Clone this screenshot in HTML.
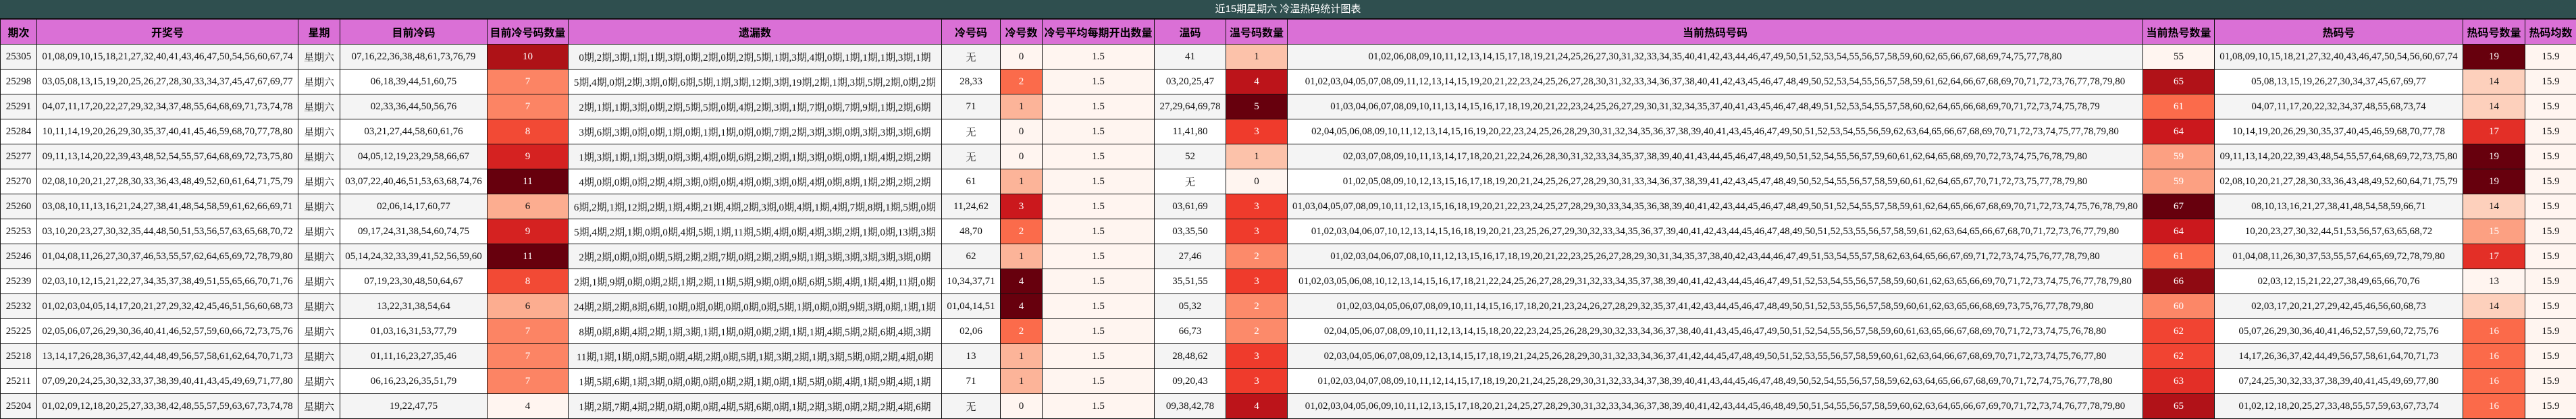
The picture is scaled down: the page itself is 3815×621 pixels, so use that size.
<!DOCTYPE html>
<html><head><meta charset="utf-8">
<style>
*{margin:0;padding:0;box-sizing:border-box}
body{width:3815px;height:621px;background:#fff;overflow:hidden;font-family:"Liberation Serif","Noto Serif CJK SC",serif;}
.t{height:28px;background:#2f4f4f;border-bottom:1px solid #111;color:#fff;text-align:center;font:15px/27px "Liberation Sans","Noto Sans CJK SC",sans-serif;}
table{border-collapse:collapse;table-layout:fixed;width:3815px}
td,th{border:1px solid #111;text-align:center;white-space:nowrap;overflow:visible;font-size:15px;color:#111;height:37px;padding:0}
th{background:#da70d6;font:bold 16px "Liberation Sans","Noto Sans CJK SC",sans-serif;color:#000}
tr:nth-child(odd) td{background:#f4f4f4}
tr:nth-child(even) td{background:#fff}
td span{display:inline-block;margin:0 -300px}
tr td.w{color:#fff}
tr td.p{background:#fff5f0}
</style></head><body>
<div class="t">近15期星期六 冷温热码统计图表</div>
<table>
<colgroup><col style="width:54px"><col style="width:387px"><col style="width:62px"><col style="width:218px"><col style="width:120px"><col style="width:553px"><col style="width:87px"><col style="width:62px"><col style="width:166px"><col style="width:106px"><col style="width:91px"><col style="width:1267px"><col style="width:106px"><col style="width:368px"><col style="width:92px"><col style="width:76px"></colgroup>
<thead><tr><th>期次</th><th>开奖号</th><th>星期</th><th>目前冷码</th><th>目前冷号码数量</th><th>遗漏数</th><th>冷号码</th><th>冷号数</th><th>冷号平均每期开出数量</th><th>温码</th><th>温号码数量</th><th>当前热码号码</th><th>当前热号数量</th><th>热码号</th><th>热码号数量</th><th>热码均数</th></tr></thead>
<tbody>
<tr><td>25305</td><td><span>01,08,09,10,15,18,21,27,32,40,41,43,46,47,50,54,56,60,67,74</span></td><td>星期六</td><td><span>07,16,22,36,38,48,61,73,76,79</span></td><td class="w" style="background:#ae1217">10</td><td><span>0期,2期,3期,1期,1期,3期,0期,2期,0期,2期,5期,1期,3期,4期,0期,1期,1期,1期,3期,1期</span></td><td>无</td><td class="p">0</td><td class="p">1.5</td><td>41</td><td style="background:#fcc2aa">1</td><td><span>01,02,06,08,09,10,11,12,13,14,15,17,18,19,21,24,25,26,27,30,31,32,33,34,35,40,41,42,43,44,46,47,49,50,51,52,53,54,55,56,57,58,59,60,62,65,66,67,68,69,74,75,77,78,80</span></td><td class="p">55</td><td><span>01,08,09,10,15,18,21,27,32,40,43,46,47,50,54,56,60,67,74</span></td><td class="w" style="background:#67000d">19</td><td class="p">15.9</td></tr>
<tr><td>25298</td><td><span>03,05,08,13,15,19,20,25,26,27,28,30,33,34,37,45,47,67,69,77</span></td><td>星期六</td><td><span>06,18,39,44,51,60,75</span></td><td class="w" style="background:#fc8464">7</td><td><span>5期,4期,0期,2期,3期,0期,6期,5期,1期,3期,12期,3期,19期,2期,1期,3期,5期,2期,0期,2期</span></td><td>28,33</td><td class="w" style="background:#fb6b4b">2</td><td class="p">1.5</td><td>03,20,25,47</td><td class="w" style="background:#bc141a">4</td><td><span>01,02,03,04,05,07,08,09,11,12,13,14,15,19,20,21,22,23,24,25,26,27,28,30,31,32,33,34,36,37,38,40,41,42,43,45,46,47,48,49,50,52,53,54,55,56,57,58,59,61,62,64,66,67,68,69,70,71,72,73,76,77,78,79,80</span></td><td class="w" style="background:#b11218">65</td><td><span>05,08,13,15,19,26,27,30,34,37,45,67,69,77</span></td><td style="background:#fdd0bc">14</td><td class="p">15.9</td></tr>
<tr><td>25291</td><td><span>04,07,11,17,20,22,27,29,32,34,37,48,55,64,68,69,71,73,74,78</span></td><td>星期六</td><td><span>02,33,36,44,50,56,76</span></td><td class="w" style="background:#fc8464">7</td><td><span>2期,1期,1期,3期,0期,2期,5期,5期,0期,4期,2期,3期,1期,7期,0期,7期,9期,1期,2期,6期</span></td><td>71</td><td style="background:#fcb499">1</td><td class="p">1.5</td><td>27,29,64,69,78</td><td class="w" style="background:#67000d">5</td><td><span>01,03,04,06,07,08,09,10,11,13,14,15,16,17,18,19,20,21,22,23,24,25,26,27,29,30,31,32,34,35,37,40,41,43,45,46,47,48,49,51,52,53,54,55,57,58,60,62,64,65,66,68,69,70,71,72,73,74,75,78,79</span></td><td class="w" style="background:#fb6b4b">61</td><td><span>04,07,11,17,20,22,32,34,37,48,55,68,73,74</span></td><td style="background:#fdd0bc">14</td><td class="p">15.9</td></tr>
<tr><td>25284</td><td><span>10,11,14,19,20,26,29,30,35,37,40,41,45,46,59,68,70,77,78,80</span></td><td>星期六</td><td><span>03,21,27,44,58,60,61,76</span></td><td class="w" style="background:#f24a35">8</td><td><span>3期,6期,3期,0期,0期,1期,0期,1期,1期,0期,0期,7期,2期,3期,3期,0期,3期,3期,3期,6期</span></td><td>无</td><td class="p">0</td><td class="p">1.5</td><td>11,41,80</td><td class="w" style="background:#ef3b2c">3</td><td><span>02,04,05,06,08,09,10,11,12,13,14,15,16,19,20,22,23,24,25,26,28,29,30,31,32,34,35,36,37,38,39,40,41,43,45,46,47,49,50,51,52,53,54,55,56,59,62,63,64,65,66,67,68,69,70,71,72,73,74,75,77,78,79,80</span></td><td class="w" style="background:#cb181d">64</td><td><span>10,14,19,20,26,29,30,35,37,40,45,46,59,68,70,77,78</span></td><td class="w" style="background:#e32f27">17</td><td class="p">15.9</td></tr>
<tr><td>25277</td><td><span>09,11,13,14,20,22,39,43,48,52,54,55,57,64,68,69,72,73,75,80</span></td><td>星期六</td><td><span>04,05,12,19,23,29,58,66,67</span></td><td class="w" style="background:#d52221">9</td><td><span>1期,3期,1期,1期,3期,0期,3期,4期,0期,6期,2期,2期,1期,3期,0期,0期,1期,4期,2期,2期</span></td><td>无</td><td class="p">0</td><td class="p">1.5</td><td>52</td><td style="background:#fcc2aa">1</td><td><span>02,03,07,08,09,10,11,13,14,17,18,20,21,22,24,26,28,30,31,32,33,34,35,37,38,39,40,41,43,44,45,46,47,48,49,50,51,52,54,55,56,57,59,60,61,62,64,65,68,69,70,72,73,74,75,76,78,79,80</span></td><td class="w" style="background:#fca082">59</td><td><span>09,11,13,14,20,22,39,43,48,54,55,57,64,68,69,72,73,75,80</span></td><td class="w" style="background:#67000d">19</td><td class="p">15.9</td></tr>
<tr><td>25270</td><td><span>02,08,10,20,21,27,28,30,33,36,43,48,49,52,60,61,64,71,75,79</span></td><td>星期六</td><td><span>03,07,22,40,46,51,53,63,68,74,76</span></td><td class="w" style="background:#67000d">11</td><td><span>4期,0期,0期,0期,2期,4期,3期,0期,0期,4期,0期,3期,0期,4期,0期,8期,1期,2期,2期,2期</span></td><td>61</td><td style="background:#fcb499">1</td><td class="p">1.5</td><td>无</td><td class="p">0</td><td><span>01,02,05,08,09,10,12,13,15,16,17,18,19,20,21,24,25,26,27,28,29,30,31,33,34,36,37,38,39,41,42,43,45,47,48,49,50,52,54,55,56,57,58,59,60,61,62,64,65,67,70,71,72,73,75,77,78,79,80</span></td><td class="w" style="background:#fca082">59</td><td><span>02,08,10,20,21,27,28,30,33,36,43,48,49,52,60,64,71,75,79</span></td><td class="w" style="background:#67000d">19</td><td class="p">15.9</td></tr>
<tr><td>25260</td><td><span>03,08,10,11,13,16,21,24,27,38,41,48,54,58,59,61,62,66,69,71</span></td><td>星期六</td><td><span>02,06,14,17,60,77</span></td><td style="background:#fcad90">6</td><td><span>6期,2期,1期,12期,2期,1期,4期,21期,4期,2期,3期,0期,4期,1期,4期,7期,8期,1期,5期,0期</span></td><td>11,24,62</td><td class="w" style="background:#cb181d">3</td><td class="p">1.5</td><td>03,61,69</td><td class="w" style="background:#ef3b2c">3</td><td><span>01,03,04,05,07,08,09,10,11,12,13,15,16,18,19,20,21,22,23,24,25,27,28,29,30,33,34,35,36,38,39,40,41,42,43,44,45,46,47,48,49,50,51,52,54,55,57,58,59,61,62,64,65,66,67,68,69,70,71,72,73,74,75,76,78,79,80</span></td><td class="w" style="background:#67000d">67</td><td><span>08,10,13,16,21,27,38,41,48,54,58,59,66,71</span></td><td style="background:#fdd0bc">14</td><td class="p">15.9</td></tr>
<tr><td>25253</td><td><span>03,10,20,23,27,30,32,35,44,48,50,51,53,56,57,63,65,68,70,72</span></td><td>星期六</td><td><span>09,17,24,31,38,54,60,74,75</span></td><td class="w" style="background:#d52221">9</td><td><span>5期,4期,2期,1期,0期,0期,4期,5期,1期,11期,5期,4期,0期,4期,3期,2期,1期,0期,13期,3期</span></td><td>48,70</td><td class="w" style="background:#fb6b4b">2</td><td class="p">1.5</td><td>03,35,50</td><td class="w" style="background:#ef3b2c">3</td><td><span>01,02,03,04,06,07,10,12,13,14,15,16,18,19,20,21,23,25,26,27,29,30,32,33,34,35,36,37,39,40,41,42,43,44,45,46,47,48,49,50,51,52,53,55,56,57,58,59,61,62,63,64,65,66,67,68,70,71,72,73,76,77,79,80</span></td><td class="w" style="background:#cb181d">64</td><td><span>10,20,23,27,30,32,44,51,53,56,57,63,65,68,72</span></td><td class="w" style="background:#fca082">15</td><td class="p">15.9</td></tr>
<tr><td>25246</td><td><span>01,04,08,11,26,27,30,37,46,53,55,57,62,64,65,69,72,78,79,80</span></td><td>星期六</td><td><span>05,14,24,32,33,39,41,52,56,59,60</span></td><td class="w" style="background:#67000d">11</td><td><span>2期,2期,0期,0期,0期,5期,2期,2期,7期,0期,2期,2期,9期,1期,3期,3期,3期,3期,3期,0期</span></td><td>62</td><td style="background:#fcb499">1</td><td class="p">1.5</td><td>27,46</td><td class="w" style="background:#fc8a6a">2</td><td><span>01,02,03,04,06,07,08,10,11,12,13,15,16,17,18,19,20,21,22,23,25,26,27,28,29,30,31,34,35,37,38,40,42,43,44,46,47,49,51,53,54,55,57,58,62,63,64,65,66,67,69,71,72,73,74,75,76,77,78,79,80</span></td><td class="w" style="background:#fb6b4b">61</td><td><span>01,04,08,11,26,30,37,53,55,57,64,65,69,72,78,79,80</span></td><td class="w" style="background:#e32f27">17</td><td class="p">15.9</td></tr>
<tr><td>25239</td><td><span>02,03,10,12,15,21,22,27,34,35,37,38,49,51,55,65,66,70,71,76</span></td><td>星期六</td><td><span>07,19,23,30,48,50,64,67</span></td><td class="w" style="background:#f24a35">8</td><td><span>2期,1期,9期,0期,0期,2期,1期,2期,11期,5期,9期,0期,0期,6期,5期,4期,1期,4期,11期,0期</span></td><td>10,34,37,71</td><td class="w" style="background:#67000d">4</td><td class="p">1.5</td><td>35,51,55</td><td class="w" style="background:#ef3b2c">3</td><td><span>01,02,03,05,06,08,10,12,13,14,15,16,17,18,21,22,24,25,26,27,28,29,31,32,33,34,35,37,38,39,40,41,42,43,44,45,46,47,49,51,52,53,54,55,56,57,58,59,60,61,62,63,65,66,69,70,71,72,73,74,75,76,77,78,79,80</span></td><td class="w" style="background:#8f0a12">66</td><td><span>02,03,12,15,21,22,27,38,49,65,66,70,76</span></td><td class="p">13</td><td class="p">15.9</td></tr>
<tr><td>25232</td><td><span>01,02,03,04,05,14,17,20,21,27,29,32,42,45,46,51,56,60,68,73</span></td><td>星期六</td><td><span>13,22,31,38,54,64</span></td><td style="background:#fcad90">6</td><td><span>24期,2期,2期,8期,6期,10期,0期,0期,0期,0期,0期,5期,1期,0期,0期,9期,3期,0期,1期,1期</span></td><td>01,04,14,51</td><td class="w" style="background:#67000d">4</td><td class="p">1.5</td><td>05,32</td><td class="w" style="background:#fc8a6a">2</td><td><span>01,02,03,04,05,06,07,08,09,10,11,14,15,16,17,18,20,21,23,24,26,27,28,29,32,35,37,41,42,43,44,45,46,47,48,49,50,51,52,53,55,56,57,58,59,60,61,62,63,65,66,68,69,73,75,76,77,78,79,80</span></td><td class="w" style="background:#fc8767">60</td><td><span>02,03,17,20,21,27,29,42,45,46,56,60,68,73</span></td><td style="background:#fdd0bc">14</td><td class="p">15.9</td></tr>
<tr><td>25225</td><td><span>02,05,06,07,26,29,30,36,40,41,46,52,57,59,60,66,72,73,75,76</span></td><td>星期六</td><td><span>01,03,16,31,53,77,79</span></td><td class="w" style="background:#fc8464">7</td><td><span>8期,0期,8期,4期,2期,1期,3期,1期,1期,0期,0期,2期,1期,1期,4期,5期,2期,6期,4期,3期</span></td><td>02,06</td><td class="w" style="background:#fb6b4b">2</td><td class="p">1.5</td><td>66,73</td><td class="w" style="background:#fc8a6a">2</td><td><span>02,04,05,06,07,08,09,10,11,12,13,14,15,18,20,22,23,24,25,26,28,29,30,32,33,34,36,37,38,40,41,43,45,46,47,49,50,51,52,54,55,56,57,58,59,60,61,63,65,66,67,68,69,70,71,72,73,74,75,76,78,80</span></td><td class="w" style="background:#f14432">62</td><td><span>05,07,26,29,30,36,40,41,46,52,57,59,60,72,75,76</span></td><td class="w" style="background:#fb6a4a">16</td><td class="p">15.9</td></tr>
<tr><td>25218</td><td><span>13,14,17,26,28,36,37,42,44,48,49,56,57,58,61,62,64,70,71,73</span></td><td>星期六</td><td><span>01,11,16,23,27,35,46</span></td><td class="w" style="background:#fc8464">7</td><td><span>11期,1期,1期,0期,5期,0期,4期,2期,0期,5期,1期,3期,2期,1期,3期,5期,0期,2期,4期,0期</span></td><td>13</td><td style="background:#fcb499">1</td><td class="p">1.5</td><td>28,48,62</td><td class="w" style="background:#ef3b2c">3</td><td><span>02,03,04,05,06,07,08,09,12,13,14,15,17,18,19,21,24,25,26,28,29,30,31,32,33,34,36,37,41,42,44,45,47,48,49,50,51,52,53,55,56,57,58,59,60,61,62,63,64,66,67,68,69,70,71,72,73,74,75,76,77,80</span></td><td class="w" style="background:#f14432">62</td><td><span>14,17,26,36,37,42,44,49,56,57,58,61,64,70,71,73</span></td><td class="w" style="background:#fb6a4a">16</td><td class="p">15.9</td></tr>
<tr><td>25211</td><td><span>07,09,20,24,25,30,32,33,37,38,39,40,41,43,45,49,69,71,77,80</span></td><td>星期六</td><td><span>06,16,23,26,35,51,79</span></td><td class="w" style="background:#fc8464">7</td><td><span>1期,5期,6期,1期,3期,0期,0期,0期,0期,2期,1期,0期,1期,5期,0期,4期,1期,9期,4期,1期</span></td><td>71</td><td style="background:#fcb499">1</td><td class="p">1.5</td><td>09,20,43</td><td class="w" style="background:#ef3b2c">3</td><td><span>01,02,03,04,07,08,09,10,11,12,14,15,17,18,19,20,21,24,25,28,29,30,31,32,33,34,37,38,39,40,41,43,44,45,46,47,48,49,50,52,54,55,56,57,58,59,62,63,64,65,66,67,68,69,70,71,72,74,75,76,77,78,80</span></td><td class="w" style="background:#e32f27">63</td><td><span>07,24,25,30,32,33,37,38,39,40,41,45,49,69,77,80</span></td><td class="w" style="background:#fb6a4a">16</td><td class="p">15.9</td></tr>
<tr><td>25204</td><td><span>01,02,09,12,18,20,25,27,33,38,42,48,55,57,59,63,67,73,74,78</span></td><td>星期六</td><td><span>19,22,47,75</span></td><td class="p">4</td><td><span>1期,2期,7期,4期,2期,0期,0期,0期,4期,5期,6期,0期,1期,2期,3期,0期,2期,2期,4期,6期</span></td><td>无</td><td class="p">0</td><td class="p">1.5</td><td>09,38,42,78</td><td class="w" style="background:#bc141a">4</td><td><span>01,02,03,04,05,06,09,10,11,12,13,15,17,18,20,21,24,25,27,28,29,30,31,32,33,34,36,37,38,39,40,41,42,43,44,45,46,48,49,50,51,54,55,56,57,58,59,60,62,63,64,65,66,67,69,70,71,72,73,74,76,77,78,79,80</span></td><td class="w" style="background:#b11218">65</td><td><span>01,02,12,18,20,25,27,33,48,55,57,59,63,67,73,74</span></td><td class="w" style="background:#fb6a4a">16</td><td class="p">15.9</td></tr>
</tbody></table>
</body></html>
